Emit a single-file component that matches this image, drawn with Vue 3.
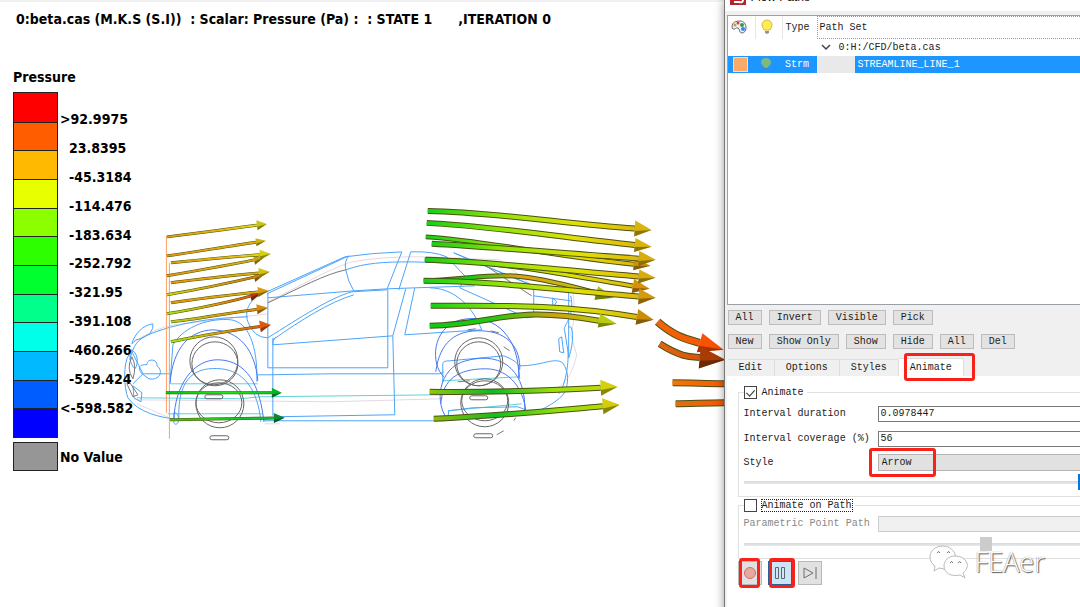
<script setup>
import { ref } from 'vue'

const bands = ['#ff0000', '#ff5d00', '#ffb900', '#e8ff00', '#8bff00', '#2eff00', '#00ff2e', '#00ff8b', '#00ffe8', '#00b9ff', '#005dff', '#0000ff']
const labels = ['>92.9975', '23.8395', '-45.3184', '-114.476', '-183.634', '-252.792', '-321.95', '-391.108', '-460.266', '-529.424', '<-598.582']

const gold = ['#d8a010', '#e0b410', '#e4e410']
const warm = ['#e8960c', '#dca810', '#d8b00c']
const hot = ['#9cf000', '#e09810', '#e84808']
const long = ['#14d018', '#94e408', '#e0e008', '#dcae0c']
const lime = ['#12d418', '#30d810', '#a0dc08', '#d0d810']

// [start, control 1, control 2, tip, colours, width, head length, head half height, head colour]
const raw = [
  [[167, 237], [190, 234], [230, 229], [267, 224], gold, 3, 10, 5, '#c9c414'],
  [[167, 256], [190, 253], [230, 246], [266, 241], warm, 3, 10, 4, '#c9b414'],
  [[167, 276], [190, 272], [230, 265], [264, 258], warm, 3, 10, 5, '#c8a012'],
  [[171, 263], [190, 261], [230, 257], [271, 254], gold, 3, 11, 5, '#d4d010'],
  [[167, 295], [190, 291], [230, 283], [264, 275], ['#c8d810', '#d8a010', '#c87810'], 3, 10, 5, '#c88010'],
  [[171, 283], [190, 280], [230, 276], [270, 272], warm, 3, 11, 5, '#d4c010'],
  [[167, 314], [190, 310], [230, 302], [262, 293], hot, 3, 12, 5, '#b83808'],
  [[171, 303], [190, 300], [230, 295], [269, 291], warm, 3, 11, 5, '#d89c0c'],
  [[171, 322], [190, 320], [230, 313], [268, 308], ['#b8d010', '#d8a010', '#d88808'], 3, 11, 5, '#d88808'],
  [[171, 342], [190, 338], [230, 331], [271, 325], hot, 3, 11, 6, '#e05808'],
  [[166, 393], [200, 393], [240, 393], [282, 393], ['#08c010', '#18e818', '#10c020'], 3, 10, 5, '#08b030'],
  [[170, 420], [200, 419], [240, 419], [285, 418], ['#60b810', '#10d020', '#10b040'], 3, 11, 5, '#088838'],
  [[426, 237], [490, 241], [550, 256], [651, 266], long, 5, 17, 6, '#d09008'],
  [[425, 260], [490, 260], [550, 272], [650, 289], long, 5, 17, 7, '#d8900c'],
  [[424, 281], [500, 278], [500, 266], [614, 298], ['#12b818', '#18c818', '#e0a010', '#c8b80c', '#c8d810'], 5, 18, 7, '#a8c010'],
  [[428, 211], [490, 212], [560, 223], [652, 230], long, 6, 17, 8, '#d8b40c'],
  [[427, 223], [490, 226], [560, 237], [652, 247], long, 6, 17, 7, '#d8b40c'],
  [[432, 244], [490, 247], [560, 253], [656, 260], long, 6, 17, 8, '#d8ac0c'],
  [[426, 260], [490, 262], [560, 270], [656, 278], long, 6, 17, 7, '#d8ac0c'],
  [[424, 281], [490, 281], [560, 290], [656, 298], long, 6, 17, 8, '#d49c0c'],
  [[431, 306], [500, 306], [560, 304], [654, 320], long, 6, 17, 8, '#cc8c08'],
  [[430, 326], [500, 324], [510, 305], [617, 324], ['#12c818', '#20c810', '#d0a010', '#b8d808'], 6, 18, 7, '#b8cc10'],
  [[430, 392], [500, 393], [560, 390], [618, 387], ['#90c808', '#10b828', '#a0e008', '#c8d408'], 6, 17, 8, '#d4d00c'],
  [[434, 419], [500, 416], [550, 411], [620, 405], ['#90b808', '#10c020', '#90e008', '#c8d408'], 6, 17, 8, '#d4cc0c'],
  [[658, 322], [676, 338], [690, 340], [724, 350], ['#f06408', '#f85408'], 8, 25, 10, '#f85004'],
  [[660, 344], [682, 358], [692, 357], [726, 360], ['#e06410', '#d04c08'], 7, 26, 11, '#a83c04'],
  [[673, 383], [690, 383], [710, 384], [730, 384], ['#f07808', '#f85404'], 7, 0, 0, 'none'],
  [[676, 404], [690, 404], [710, 403], [730, 403], ['#e07010', '#f85404'], 7, 0, 0, 'none'],
]
const arrows = raw.map(([s, a, b, t, colors, width, len, half, fill]) => {
  const d = Math.hypot(t[0] - b[0], t[1] - b[1])
  const ux = (t[0] - b[0]) / d
  const uy = (t[1] - b[1]) / d
  const bx = t[0] - ux * len
  const by = t[1] - uy * len
  const low = `${bx - uy * half},${by + ux * half}`
  return {
    x1: s[0], x2: t[0], colors, width, fill,
    path: `M${s} C${a} ${b} ${bx},${by}`,
    head: `${bx + uy * half},${by - ux * half} ${t} ${low}`,
    shade: `${bx - uy * half * 0.3},${by + ux * half * 0.3} ${t} ${low}`,
  }
})

const blueLines = [
  'M267 292L345 257Q372 253 402 252L387 290',
  'M267 294L349 256Q344 262 346 270Q348 282 354 291',
  'M411 252L399 290M411 252Q433 251 447 257L466 277L460 288',
  'M268 298L354 291L387 289L415 288L475 286',
  'M268 293V368H388V290',
  'M268 338C300 318 330 298 352 292L387 290',
  'M273 340C300 321 330 302 354 295',
  'M273 338V416M273 345L393 336L406 289M393 336L395 415L274 417',
  'M273 345Q272 341 276 337',
  'M415 288L405 335L482 330C470 300 449 288 430 288',
  'M346 270C365 263 385 262 411 262L450 263',
  'M454 253L534 286V317L527 318L460 288M454 253L478 263Q508 276 534 286',
  'M534 296L571 301M573 291L569 293V358',
  'M267 292C250 298 244 310 248 322Q254 338 268 338',
  'M130 360C133 345 139 339 148 335C177 323 212 318 248 317',
  'M132 344C134 335 143 325 153 324Q154 328 150 334Q140 340 136 340Z',
  'M131 350L143 374L133 384',
  'M131 350C138 352 139 364 135 369C130 364 129 357 131 350',
  'M129 355C123 363 124 389 128 398C138 413 161 418 180 420',
  'M142 374C137 368 140 364 147 365C147 358 158 359 157 366C164 371 160 381 149 379Z',
  'M143 374H170M258 375H268L330 374H440L444 372',
  'M133 386L142 393L141 402L134 398Z',
  'M170 384L173 345C185 325 212 318 231 320C248 322 258 345 257 382',
  'M264 421H444L520 413',
  'M179 420C177 374 199 367 221 369C244 371 258 390 261 422',
  'M174 421V413C177 412 180 418 178 423C176 426 173 424 174 421',
  'M443 382L443 364Q443 361 450 361L504 356Q520 362 519 368L520 379',
  'M520 366C543 366 554 357 563 363C570 373 568 383 566 391C560 402 542 410 532 414Q525 414 520 412',
  'M569 358C576 338 572 322 569 328M571 296C576 318 562 326 565 331L568 350C570 365 564 390 559 394',
  'M562 337L564 353L560 352L559 339ZM553 298V308L557 302Z',
  'M448 420L449 411L473 408L518 407L526 410',
]
const navyLines = [
  'M170 384C173 347 190 331 213 330C240 331 255 350 258 381',
  'M174 420C175 386 193 359 219 360C247 361 260 385 264 422',
  'M444 377C431 365 431 328 461 320C498 312 520 341 519 378',
  'M436 372C440 342 456 330 482 331C510 332 521 350 520 370',
  'M449 421C434 405 438 368 466 361C506 350 527 375 525 413',
  'M441 404C443 379 459 369 486 369C511 369 524 391 526 411',
]
const paleLines = [
  'M268 302C305 284 325 271 352 262Q385 256 430 257L500 260L534 287L573 291Q577 315 571 335L577 355C572 378 562 388 551 391',
  'M134 342Q155 328 175 325L268 314',
  'M134 400L330 402L443 399M137 404L174 420M265 424H280',
]
const tealLines = [
  'M171 384H258M137 398L240 399L260 397L440 395L553 389M168 414H262',
  'M443 381L520 377M448 411L522 404',
]
const darkLines = [
  'M268 303C300 288 326 274 346 270',
  'M132 357Q137 366 133 379Q126 369 132 357M128 380L138 395L133 397L127 384Z',
  'M480 262L532 296',
  'M458 382L470 381M468 330L476 329M491 331L499 333M504 347L510 351M497 435L504 431M516 418L514 421',
]

const tabs = ['Edit', 'Options', 'Styles', 'Animate']
const firstRow = ['All', 'Invert', 'Visible', 'Pick']
const secondRow = ['New', 'Show Only', 'Show', 'Hide', 'All', 'Del']
const animate = ref(true)
const onPath = ref(false)
const duration = ref('0.0978447')
const coverage = ref('56')
const style = ref('Arrow')
const speed = ref(100)
const point = ref(73)
</script>

<template>
  <div class="app">
    <main class="view">
      <svg class="scene" viewBox="0 0 724 607" aria-hidden="true">
        <defs>
          <linearGradient v-for="(a, i) in arrows" :id="'flow' + i" :key="i" gradientUnits="userSpaceOnUse" :x1="a.x1" :x2="a.x2" y1="0" y2="0">
            <stop v-for="(c, n) in a.colors" :key="n" :offset="n / (a.colors.length - 1)" :stop-color="c" />
          </linearGradient>
        </defs>
        <g fill="none" stroke-width="1">
          <path v-for="d in paleLines" :key="d" :d="d" stroke="#e6d8e2" />
          <path v-for="d in tealLines" :key="d" :d="d" stroke="#5ed2d8" />
          <path v-for="d in blueLines" :key="d" :d="d" stroke="#4ba4fa" />
          <path v-for="d in navyLines" :key="d" :d="d" stroke="#4678f2" />
          <g stroke="#666">
            <path v-for="d in darkLines" :key="d" :d="d" stroke="#777" />
            <circle cx="214" cy="361" r="24" /><ellipse cx="215" cy="364" rx="23" ry="22" />
            <circle cx="220" cy="404" r="24" /><ellipse cx="219" cy="403" rx="23" ry="20" />
            <circle cx="479" cy="362" r="24" /><ellipse cx="479" cy="364" rx="22" ry="22" />
            <circle cx="485" cy="403" r="24" /><ellipse cx="485" cy="401" rx="23" ry="20" />
            <rect x="205" y="395" width="18" height="4" rx="2" /><rect x="210" y="436" width="19" height="4" rx="2" />
            <rect x="470" y="396" width="18" height="4" rx="2" /><rect x="474" y="434" width="19" height="4" rx="2" />
          </g>
          <path d="M166.500 236V413M169.500 263V439" stroke="#ffa060" />
        </g>
        <g v-for="(a, i) in arrows" :key="i">
          <path :d="a.path" fill="none" stroke="#4c5010" :stroke-width="a.width" />
          <path :d="a.path" fill="none" :stroke="`url(#flow${i})`" :stroke-width="a.width > 3 ? a.width - 2 : 2" />
          <polygon :points="a.head" :fill="a.fill" />
          <polygon v-if="a.fill !== 'none'" :points="a.shade" fill="#000" opacity="0.350" />
        </g>
      </svg>
      <h1>0:beta.cas (M.K.S (S.I))&nbsp; : Scalar: Pressure (Pa) :&nbsp; : STATE 1<span>,ITERATION 0</span></h1>
      <section class="legend">
        <h2>Pressure</h2>
        <div class="scale">
          <div class="bands"><i v-for="c in bands" :key="c" :style="{ background: c }" /></div>
          <ol>
            <li v-for="(l, i) in labels" :key="l" :class="{ inner: i > 0 && i < 10 }">{{ l }}</li>
          </ol>
        </div>
        <p class="none"><i />No Value</p>
      </section>
    </main>

    <aside class="dialog">
      <header>
        <svg width="16" height="16" viewBox="0 0 16 16"><rect width="16" height="16" fill="#b6232c" /><path d="M4 3H9Q12 3 12 6T9 8Q13 8 13 11T9 13H4M5 8H9" fill="none" stroke="#fff" stroke-width="2" /></svg>
        <span>Flow Paths</span>
      </header>
      <table class="tree">
        <colgroup><col class="c1"><col class="c2"><col class="c3"><col></colgroup>
        <thead>
          <tr>
            <th><svg width="16" height="16" viewBox="0 0 16 16"><path d="M1 8C1 3 5 2 9 2C13 2 15 5 15 9C15 12 13 14 11 14C8 14 9 10 7 9C5 8 4 11 2 10Q1 9 1 8Z" fill="#eef2f6" stroke="#5d6b7b" /><circle cx="4" cy="6" r="1.500" fill="#e09030" /><circle cx="7" cy="4" r="1.500" fill="#d04040" /><circle cx="11" cy="6" r="2" fill="#30a040" /><circle cx="12" cy="10" r="2" fill="#3b83f0" /></svg></th>
            <th><svg width="12" height="16" viewBox="0 0 12 16"><path d="M3 11Q1 8 1 6A5 5 0 0 1 11 6Q11 8 9 11Z" fill="#ffec50" stroke="#d8bc40" /><path d="M4 12H8V14L6 15L4 14Z" fill="#8e959b" /></svg></th>
            <th>Type</th>
            <th class="name">Path Set</th>
          </tr>
        </thead>
        <tbody>
          <tr>
            <td /><td /><td />
            <td class="root"><svg width="10" height="8" viewBox="0 0 10 8"><path d="M1 2L5 6L9 2" fill="none" stroke="#444" stroke-width="1.500" /></svg>0:H:/CFD/beta.cas</td>
          </tr>
          <tr class="selected">
            <td><i class="swatch" /></td>
            <td><svg width="12" height="14" viewBox="0 0 12 14"><path d="M3 9Q1 7 1 5A5 4 0 0 1 11 5Q11 7 9 9L7 11H5Z" fill="#80b980" /><path d="M4 11H8L6 13Z" fill="#57809c" /></svg></td>
            <td>Strm</td>
            <td class="leaf"><span>STREAMLINE_LINE_1</span></td>
          </tr>
        </tbody>
      </table>
      <div class="buttons">
        <button v-for="b in firstRow" :key="b" type="button">{{ b }}</button>
      </div>
      <div class="buttons">
        <button v-for="b in secondRow" :key="b" type="button">{{ b }}</button>
      </div>
      <nav role="tablist">
        <button v-for="t in tabs" :key="t" type="button" role="tab" :aria-selected="t === 'Animate'" :class="{ active: t === 'Animate' }">{{ t }}</button>
      </nav>
      <div class="pane">
        <fieldset>
          <legend><input id="animate" v-model="animate" type="checkbox"><label for="animate">Animate</label></legend>
          <div class="row first"><label for="duration">Interval duration</label><input id="duration" v-model="duration" type="text"></div>
          <div class="row"><label for="coverage">Interval coverage (%)</label><input id="coverage" v-model="coverage" type="text"></div>
          <div class="row style"><label for="style">Style</label><div class="choice"><select id="style" v-model="style"><option>Arrow</option></select></div></div>
          <input v-model="speed" class="blue" type="range" aria-label="Interval coverage">
        </fieldset>
        <fieldset class="second">
          <legend><input id="onpath" v-model="onPath" type="checkbox"><label for="onpath" class="focus">Animate on Path</label></legend>
          <div class="row"><label for="point">Parametric Point Path</label><input id="point" type="text" disabled></div>
          <input v-model="point" type="range" disabled aria-label="Point on path">
        </fieldset>
        <div class="player">
          <button type="button" class="mark" aria-label="Record"><svg width="16" height="16" viewBox="0 0 16 16"><circle cx="8" cy="8" r="5.500" fill="#e3aaa2" stroke="#dd6a60" /></svg></button>
          <button type="button" class="mark pause" aria-label="Pause"><svg width="16" height="16" viewBox="0 0 16 16"><path d="M3.500 2.500H6.500V13.500H3.500ZM9.500 2.500H12.500V13.500H9.500Z" fill="#d5e5f2" stroke="#566673" /></svg></button>
          <button type="button" aria-label="Step"><svg width="16" height="16" viewBox="0 0 16 16"><path d="M2 3V13L11 8ZM14 2V14" fill="none" stroke="#677078" /></svg></button>
        </div>
      </div>
      <div class="watermark">
        <svg width="40" height="36" viewBox="0 0 40 36"><g fill="#fff" stroke="#bbb"><path d="M14 2C6 2 1 7 1 13C1 17 3 20 6 22L5 27L10 24Q15 26 20 24C27 20 28 13 25 8Q21 2 14 2Z" /><path d="M26 12C19 12 15 17 15 22C15 29 22 33 31 31L36 34L34 29C38 26 39 22 38 19Q35 12 26 12Z" /></g><g fill="none" stroke="#777"><path d="M8 9Q10 6 11 9M18 9Q20 6 21 9M21 19Q23 16 24 19M29 19Q31 16 32 19" /></g></svg>
        <span>FEAer</span>
      </div>
    </aside>
  </div>
</template>

<style>
body { margin: 0; background: #fff; }
</style>

<style scoped>
* { box-sizing: border-box; }
.app { display: grid; grid-template-columns: minmax(0, 1fr) 33%; height: 100vh; overflow: hidden; font: 10px/16px "Liberation Mono", monospace; color: #1c1c1c; }
.view { position: relative; overflow: hidden; background: #fff; border-top: 2px solid #f0f0f0; padding: 8px 0 0 13px; font: bold 14px/18px "DejaVu Sans Condensed", "DejaVu Sans", sans-serif; font-stretch: condensed; color: #000; }
.scene { position: absolute; left: 0; top: -2px; width: 100%; }
h1, h2, p, ol { margin: 0; padding: 0; font-size: inherit; list-style: none; }
h1 { position: relative; padding-left: 3px; white-space: nowrap; }
h1 span { margin-left: 26px; }
.legend { position: relative; margin-top: 40px; }
.scale { display: flex; gap: 2px; height: 346px; margin-top: 6px; }
.bands { display: grid; grid-auto-rows: 1fr; width: 45px; border: 1px solid #222; }
.bands i + i { border-top: 1px solid #222; }
ol { display: grid; grid-template-rows: repeat(11, 1fr); align-items: center; margin: 13px 0 16px; }
.inner { padding-left: 9px; }
.none { display: flex; align-items: center; gap: 2px; margin-top: 4px; }
.none i { width: 45px; height: 29px; background: #969696; border: 1px solid #222; }

.dialog { position: relative; background: #f0f0f0; border-left: 1px solid #777; padding-left: 2px; box-shadow: 0 0 9px rgba(0, 0, 0, 0.4); }
header { display: flex; align-items: flex-end; gap: 5px; height: 11px; margin-left: -2px; padding: 0 0 6px 5px; background: #fff; font: 12px/16px "Liberation Sans", sans-serif; color: #111; overflow: hidden; }
header svg { flex: none; }
.tree { width: 100%; height: 290px; margin-top: 4px; background: #fff; border: 1px solid #9aa0a6; border-right: 0; border-collapse: separate; border-spacing: 0; table-layout: fixed; }
.tree tbody::after { content: ""; display: table-row; }
.tree th, .tree td { padding: 0; font-weight: normal; text-align: center; vertical-align: middle; white-space: nowrap; }
.tree svg { vertical-align: middle; }
.tree thead tr { height: 23px; }
.tree tbody tr { height: 17px; }
.c1 { width: 27px; } .c2 { width: 27px; } .c3 { width: 35px; }
.tree th { padding-right: 4px; }
.tree th + th { border-left: 1px solid #e6e6e6; }
.tree th.name { text-align: left; padding-left: 2px; border: 1px dotted #999; border-right: 0; }
.tree td + td { padding-right: 4px; }
.tree td.root { text-align: left; padding-left: 4px; }
.root svg { margin-right: 8px; }
.selected { background: #1e96ff; color: #fff; }
.swatch { display: block; width: 15px; height: 15px; margin-left: 5px; background: #fda968; border: 1px solid #ffd9bc; }
.tree td.leaf { text-align: left; background: #e9e9e9; padding-right: 0; }
.leaf span { display: block; margin-left: 38px; padding-left: 3px; background: #1e96ff; line-height: 17px; }
button, input, select { font: inherit; color: inherit; margin: 0; border-radius: 0; }
.buttons { display: flex; gap: 7px; margin: 5px 0 9px 1px; }
.buttons button { height: 15px; padding: 0 7px; border: 1px solid #bcbcbc; background: #e2e2e2; line-height: 13px; white-space: nowrap; }
nav { display: flex; align-items: flex-end; height: 18px; margin-left: 1px; }
nav button { position: relative; height: 17px; padding: 0 11px; background: #f0f0f0; border: 1px solid #dedede; border-width: 1px 1px 0 0; line-height: 16px; }
nav .active { height: 18px; background: #fff; }
nav .active::after, .mark::after, .choice::after { content: ""; position: absolute; border: 3px solid #f9221b; border-radius: 3px; }
nav .active::after { inset: -6px -12px -5px 5px; z-index: 2; }
.pane { padding: 10px 0 0 11px; background: #fff; height: 300px; }
fieldset { margin: 0; padding: 0 0 0 5px; border: 1px solid #e0e0e0; border-right: 0; min-width: 0; height: 111px; }
legend { display: flex; align-items: center; gap: 5px; height: 13px; padding: 0 3px 0 0; }
legend input { appearance: none; display: grid; place-items: center; width: 13px; height: 13px; border: 1px solid #444; background: #fff; }
legend input:checked::after { content: ""; width: 4px; height: 7px; margin-bottom: 2px; border: solid #333; border-width: 0 1px 1px 0; transform: rotate(42deg); }
.focus { outline: 1px dotted #222; line-height: 11px; }
.row { display: grid; grid-template-columns: 134px minmax(0, 1fr); align-items: center; margin-top: 9px; height: 16px; }
.row.first { margin-top: 7px; }
.row.style { margin-top: 7px; }
.row input { width: 100%; height: 16px; padding: 0 2px; border: 1px solid #7a7a7a; border-right: 0; background: #fff; }
.choice { position: relative; }
.choice::after { inset: -6px auto -6px -9px; width: 61px; }
select { appearance: none; display: block; width: 100%; height: 17px; padding: 0 3px; border: 1px solid #b5b5b5; border-right: 0; background: #e1e1e1; }
input[type="range"] { appearance: none; display: block; width: 100%; height: 16px; margin: 4px 0 0; background: linear-gradient(#d6dadb, #e7eaea) 0 7px / 100% 3px no-repeat; }
input[type="range"]::-webkit-slider-thumb { appearance: none; width: 12px; height: 14px; background: #ccc; }
input.blue[type="range"]::-webkit-slider-thumb { width: 2px; height: 16px; background: #0878d8; }
fieldset.second { height: 60px; margin-top: 2px; color: #888; }
.second legend { color: #1c1c1c; }
.second .row { margin-top: 4px; }
.second .row input { background: #f0f0f0; border-color: #ccc; }
.player { display: flex; gap: 6px; margin-top: 2px; }
.player button { position: relative; display: grid; place-items: center; width: 24px; height: 24px; padding: 0; border: 1px solid #b8b8b8; background: #e1e1e1; }
.player .pause { background: #cce4f7; border-color: #2a6096; }
.mark::after { inset: -4px 1px -4px 0; }
.player .pause::after { inset: -4px -4px -4px 0; }
.watermark { position: absolute; left: 204px; top: 542px; display: flex; gap: 6px; align-items: center; font: 300 27px/40px "Open Sans", "Noto Sans", sans-serif; color: #fff; text-shadow: 1px 1px 1px #555, 0 0 1px #777; }
</style>
